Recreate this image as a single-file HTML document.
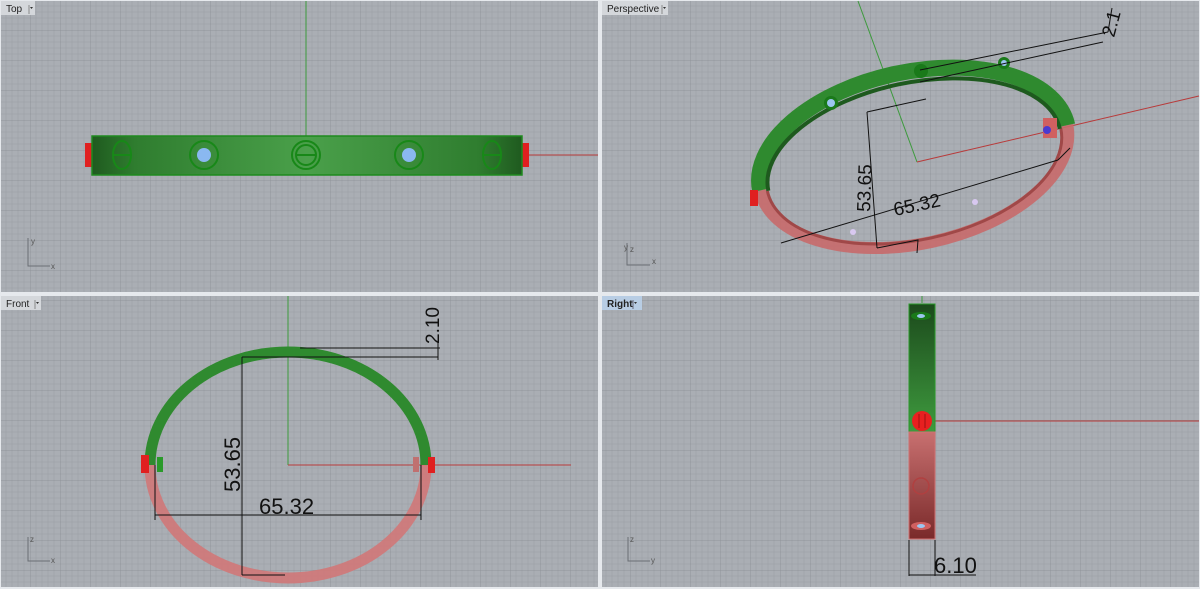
<!DOCTYPE html>
<html><head><meta charset="utf-8"><style>
html,body{margin:0;padding:0;background:#e6e9ed;}
svg{display:block}
text{font-family:"Liberation Sans",sans-serif}
</style></head><body>
<svg width="1200" height="589" viewBox="0 0 1200 589" xmlns="http://www.w3.org/2000/svg">
<defs>
<pattern id="g" width="30" height="30" patternUnits="userSpaceOnUse">
<rect width="30" height="30" fill="#aaaeb4"/>
<path d="M6 0V30M12 0V30M18 0V30M24 0V30M0 6H30M0 12H30M0 18H30M0 24H30" stroke="#a1a5ab" stroke-width="1"/>
<path d="M0 0V30M0 0H30" stroke="#91959b" stroke-width="1"/>
</pattern>
<linearGradient id="tg" x1="0" x2="1" y1="0" y2="0">
<stop offset="0" stop-color="#1f5a1f"/><stop offset="0.1" stop-color="#2f7d2f"/><stop offset="0.5" stop-color="#4aa04a"/><stop offset="0.9" stop-color="#2f7d2f"/><stop offset="1" stop-color="#1f5a1f"/></linearGradient>
<linearGradient id="rg" x1="0" x2="0" y1="0" y2="1">
<stop offset="0" stop-color="#1c4a1c"/><stop offset="1" stop-color="#3e9a3e"/></linearGradient>
<linearGradient id="rr" x1="0" x2="0" y1="0" y2="1">
<stop offset="0" stop-color="#c87070"/><stop offset="1" stop-color="#7a2a2a"/></linearGradient>
</defs>
<rect width="1200" height="589" fill="#e6e9ed"/>
<rect x="1" y="1" width="597" height="291" fill="url(#g)"/>
<rect x="602" y="1" width="597" height="291" fill="url(#g)"/>
<rect x="1" y="296" width="597" height="291" fill="url(#g)"/>
<rect x="602" y="296" width="597" height="291" fill="url(#g)"/>

<!-- TOP -->
<line x1="306" y1="1" x2="306" y2="136" stroke="#3c9a3c"/>
<line x1="529" y1="155" x2="598" y2="155" stroke="#b83a3a"/>
<rect x="85" y="143" width="8" height="24" fill="#e02020"/>
<rect x="521" y="143" width="8" height="24" fill="#e02020"/>
<rect x="92" y="136" width="430" height="39" fill="url(#tg)" stroke="#1e8a1e" stroke-width="1.5"/>
<g fill="none" stroke="#188818" stroke-width="2">
<ellipse cx="122" cy="155" rx="9" ry="14"/><line x1="114" y1="155" x2="130" y2="155"/>
<ellipse cx="492" cy="155" rx="9" ry="14"/><line x1="484" y1="155" x2="500" y2="155"/>
<circle cx="306" cy="155" r="14"/><circle cx="306" cy="155" r="10"/><line x1="296" y1="155" x2="316" y2="155"/>
<circle cx="204" cy="155" r="14"/><circle cx="409" cy="155" r="14"/>
</g>
<circle cx="204" cy="155" r="7" fill="#8ab8f0"/><circle cx="409" cy="155" r="7" fill="#8ab8f0"/>
<path d="M28 238V266H50" fill="none" stroke="#6a6e74"/><text x="31" y="244" font-size="8" fill="#555">y</text><text x="51" y="269" font-size="8" fill="#555">x</text>
<rect x="1" y="1" width="34" height="14" fill="#d4d7db"/><text x="6" y="12" font-size="10" fill="#222">Top</text><path d="M29 5V14" stroke="#888"/><path d="M30 7l3 0-1.5 2z" fill="#333"/>

<!-- PERSPECTIVE -->
<line x1="858" y1="1" x2="917" y2="162" stroke="#3c9a3c"/>
<line x1="917" y1="162" x2="1199" y2="96" stroke="#b83a3a"/>
<g transform="translate(912 150) rotate(-12)">
<path d="M157 8A157 86 0 0 1 -157 8" fill="none" stroke="#c86a6a" stroke-width="12" opacity="0.9"/>
<path d="M150 10A150 80 0 0 1 -150 10" fill="none" stroke="#a04848" stroke-width="3"/>
<path d="M-157 8A157 86 0 0 1 157 8" fill="none" stroke="#2f8a2f" stroke-width="16"/>
<path d="M-149 10A149 77 0 0 1 149 10" fill="none" stroke="#1e5a1e" stroke-width="4"/>
</g>
<rect x="750" y="190" width="8" height="16" fill="#e02020"/>
<rect x="1043" y="118" width="14" height="20" fill="#d06060"/><circle cx="1047" cy="130" r="4" fill="#4a3ad0"/>
<circle cx="831" cy="103" r="7" fill="#1a7a1a"/><circle cx="831" cy="103" r="4" fill="#9cc6f0"/>
<circle cx="1004" cy="63" r="6" fill="#1a7a1a"/><circle cx="1004" cy="63" r="3" fill="#9cc6f0"/>
<circle cx="921" cy="71" r="7" fill="#1a7a1a"/>
<circle cx="853" cy="232" r="3" fill="#d8c8f0"/><circle cx="975" cy="202" r="3" fill="#d8c8f0"/>
<g stroke="#111" fill="none" stroke-width="1">
<path d="M867 112L926 99M867 112L877 248M877 248L918 240L917 253"/>
<path d="M781 243L1058 160M1058 160L1070 148"/>
<path d="M920 70L1108 32M920 82L1103 42M1108 32L1112 8"/>
</g>
<text transform="translate(870 212) rotate(-88)" font-size="19" fill="#111">53.65</text>
<text transform="translate(895 216) rotate(-12)" font-size="19" fill="#111">65.32</text>
<text transform="translate(1114 38) rotate(-75)" font-size="19" fill="#111">2.1</text>
<path d="M627 243V265H650" fill="none" stroke="#6a6e74"/><text x="624" y="250" font-size="8" fill="#555">y</text><text x="630" y="252" font-size="8" fill="#555">z</text><text x="652" y="264" font-size="8" fill="#555">x</text>
<rect x="602" y="1" width="66" height="14" fill="#d4d7db"/><text x="607" y="12" font-size="10" fill="#222">Perspective</text><path d="M662 5V14" stroke="#888"/><path d="M663 7l3 0-1.5 2z" fill="#333"/>

<!-- FRONT -->
<line x1="288" y1="296" x2="288" y2="465" stroke="#3c9a3c"/>
<line x1="288" y1="465" x2="571" y2="465" stroke="#b83a3a"/>
<path d="M150 465A138 113 0 0 1 426 465" fill="none" stroke="#2f8a2f" stroke-width="11"/>
<path d="M426 465A138 113 0 0 1 150 465" fill="none" stroke="#d07878" stroke-width="11" opacity="0.9"/>
<rect x="141" y="455" width="8" height="18" fill="#e02020"/><rect x="157" y="457" width="6" height="15" fill="#2a9a2a"/>
<rect x="428" y="457" width="7" height="16" fill="#e02020"/><rect x="413" y="457" width="6" height="15" fill="#c07070"/>
<g stroke="#111" fill="none" stroke-width="1">
<path d="M242 357V575M242 575H285M242 357H438M300 348H440M438 340V360"/>
<path d="M155 515H421M155 465V520M421 465V520"/>
</g>
<text transform="translate(240 492) rotate(-90)" font-size="22" fill="#111">53.65</text>
<text x="259" y="514" font-size="22" fill="#111">65.32</text>
<text transform="translate(439 344) rotate(-90)" font-size="19" fill="#111">2.10</text>
<path d="M28 537V561H50" fill="none" stroke="#6a6e74"/><text x="30" y="542" font-size="8" fill="#555">z</text><text x="51" y="563" font-size="8" fill="#555">x</text>
<rect x="1" y="296" width="40" height="14" fill="#d4d7db"/><text x="6" y="307" font-size="10" fill="#222">Front</text><path d="M35 300V309" stroke="#888"/><path d="M36 302l3 0-1.5 2z" fill="#333"/>

<!-- RIGHT -->
<line x1="922" y1="296" x2="922" y2="303" stroke="#3c9a3c"/>
<line x1="935" y1="421" x2="1199" y2="421" stroke="#b83a3a"/>
<rect x="909" y="304" width="26" height="128" fill="url(#rg)" stroke="#2a9a2a"/>
<rect x="909" y="432" width="26" height="107" fill="url(#rr)" stroke="#d07070"/>
<ellipse cx="921" cy="316" rx="10" ry="4" fill="#1a7a1a"/><ellipse cx="921" cy="316" rx="4" ry="2" fill="#9cc6f0"/>
<ellipse cx="921" cy="526" rx="10" ry="4" fill="#d06060"/><ellipse cx="921" cy="526" rx="4" ry="2" fill="#9cc6f0"/>
<circle cx="921" cy="486" r="8" fill="none" stroke="#b04040" stroke-width="1.5"/>
<circle cx="922" cy="421" r="10" fill="#e82020"/><path d="M919 414V428M925 414V428" stroke="#a01010"/>
<g stroke="#111" fill="none"><path d="M909 540V576M935 540V576M909 575H976"/></g>
<text x="934" y="573" font-size="22" fill="#111">6.10</text>
<path d="M628 537V561H650" fill="none" stroke="#6a6e74"/><text x="630" y="542" font-size="8" fill="#555">z</text><text x="651" y="563" font-size="8" fill="#555">y</text>
<rect x="602" y="296" width="40" height="14" fill="#b8cde4"/><text x="607" y="307" font-size="10" font-weight="bold" fill="#222">Right</text><path d="M633 300V309" stroke="#667"/><path d="M634 302l3 0-1.5 2z" fill="#333"/>
</svg>
</body></html>
